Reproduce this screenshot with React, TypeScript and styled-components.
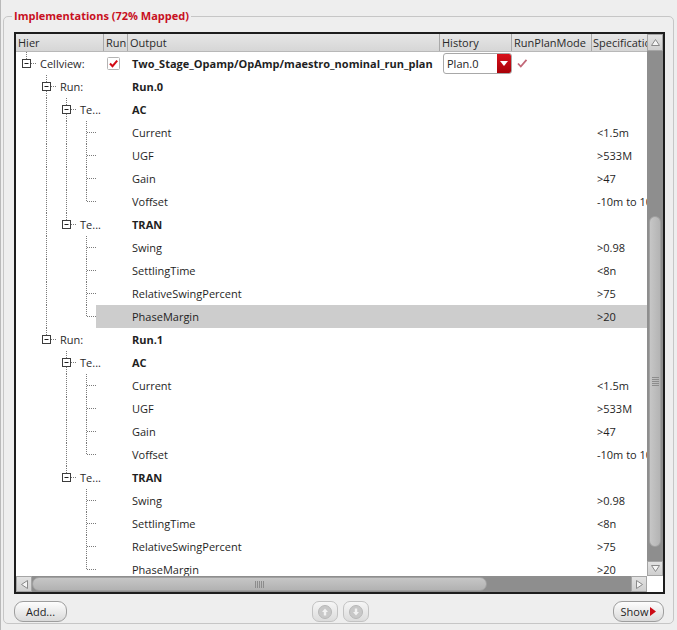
import React from 'react';
import styled, { createGlobalStyle } from 'styled-components';

const GlobalStyle = createGlobalStyle`
  body {
    margin: 0;
    background: #eeeeee;
    font-family: "Open Sans", "DejaVu Sans", sans-serif;
    font-size: 11px;
    color: #222;
  }
`;

type Branch = 'empty' | 'pass' | 'tee' | 'last' | 'teeExp' | 'lastExp';

type RowData = {
  branches: Branch[];
  hier?: string;
  output: string;
  bold?: boolean;
  spec?: string;
  selected?: boolean;
  top?: boolean;
};

const leaves = (pre: Branch[], items: [string, string][], selectLast = false): RowData[] =>
  items.map(([output, spec], i) => ({
    branches: [...pre, i === items.length - 1 ? 'last' : 'tee'],
    output,
    spec,
    selected: selectLast && i === items.length - 1,
  }));

const acItems: [string, string][] = [
  ['Current', '<1.5m'],
  ['UGF', '>533M'],
  ['Gain', '>47'],
  ['Voffset', '-10m to 10m'],
];
const tranItems: [string, string][] = [
  ['Swing', '>0.98'],
  ['SettlingTime', '<8n'],
  ['RelativeSwingPercent', '>75'],
  ['PhaseMargin', '>20'],
];

const rows: RowData[] = [
  { branches: ['lastExp'], hier: 'Cellview:', output: 'Two_Stage_Opamp/OpAmp/maestro_nominal_run_plan', bold: true, top: true },
  { branches: ['empty', 'teeExp'], hier: 'Run:', output: 'Run.0', bold: true },
  { branches: ['empty', 'pass', 'teeExp'], hier: 'Te...', output: 'AC', bold: true },
  ...leaves(['empty', 'pass', 'pass'], acItems),
  { branches: ['empty', 'pass', 'lastExp'], hier: 'Te...', output: 'TRAN', bold: true },
  ...leaves(['empty', 'pass', 'empty'], tranItems, true),
  { branches: ['empty', 'lastExp'], hier: 'Run:', output: 'Run.1', bold: true },
  { branches: ['empty', 'empty', 'teeExp'], hier: 'Te...', output: 'AC', bold: true },
  ...leaves(['empty', 'empty', 'pass'], acItems),
  { branches: ['empty', 'empty', 'lastExp'], hier: 'Te...', output: 'TRAN', bold: true },
  ...leaves(['empty', 'empty', 'empty'], tranItems),
];

const COLS = '88px 24px 312px 72px 80px 55px';

const Page = styled.div`
  width: 674px;
  height: 630px;
  border-left: 1px solid #b9b9b9;
  padding-left: 2px;
  overflow: hidden;
`;

const Group = styled.fieldset`
  margin: 9px 0 0 0;
  width: 670px;
  box-sizing: border-box;
  border: 1px solid #c6c6c6;
  border-radius: 5px;
  padding: 9px 8px 1px 10px;
`;

const Legend = styled.legend`
  margin-left: -2px;
  padding: 0 2px;
  line-height: 14px;
  font-weight: bold;
  color: #c8101e;
`;

const TreeFrame = styled.div`
  border: 2px solid #1d1d1d;
  display: grid;
  grid-template-columns: 631px 16px;
  grid-template-rows: 542px 16px;
  background: #fff;
`;

const Main = styled.div`
  display: flex;
  flex-direction: column;
  overflow: hidden;
`;

const HeaderRow = styled.div`
  display: grid;
  grid-template-columns: ${COLS};
  height: 18px;
  background: linear-gradient(#e6e6e6, #d6d6d6);
  border-bottom: 1px solid #b8b8b8;
  box-sizing: border-box;
`;

const HeaderCell = styled.div<{ $last?: boolean }>`
  padding-left: ${(p) => (p.$last ? 1 : 2)}px;
  line-height: 17px;
  white-space: nowrap;
  overflow: hidden;
  color: #2a2a2a;
  border-right: ${(p) => (p.$last ? 'none' : '1px solid #a9a9a9')};
`;

const Body = styled.div`
  height: 524px;
  overflow: hidden;
`;

const Row = styled.div`
  display: grid;
  grid-template-columns: ${COLS};
  height: 23px;
`;

const HierCell = styled.div`
  display: flex;
  overflow: hidden;
`;

const HierLabel = styled.div<{ $selected?: boolean }>`
  flex: 1;
  padding-left: 4px;
  line-height: 23px;
  white-space: nowrap;
  color: #2a2a2a;
  background: ${(p) => (p.$selected ? '#cdcdcd' : 'transparent')};
`;

const Cell = styled.div<{ $selected?: boolean; $pad?: number; $bold?: boolean }>`
  display: flex;
  align-items: center;
  padding-left: ${(p) => p.$pad ?? 4}px;
  white-space: nowrap;
  overflow: hidden;
  font-weight: ${(p) => (p.$bold ? 'bold' : 'normal')};
  color: #1f1f1f;
  background: ${(p) => (p.$selected ? '#cdcdcd' : 'transparent')};
`;

const Combo = styled.div`
  display: flex;
  width: 69px;
  height: 21px;
  box-sizing: border-box;
  border: 1px solid #a8a8a8;
  border-radius: 3px;
  background: #fff;
  overflow: hidden;
`;

const ComboText = styled.div`
  flex: 1;
  padding-left: 3px;
  line-height: 19px;
  color: #222;
`;

const ComboButton = styled.div`
  width: 14px;
  display: flex;
  align-items: center;
  justify-content: center;
  background: linear-gradient(#d8121c, #a80008);
`;

const VScroll = styled.div`
  display: flex;
  flex-direction: column;
  background: #8e8e8e;
`;

const ArrowBox = styled.div<{ $h: number }>`
  height: ${(p) => p.$h}px;
  display: flex;
  align-items: center;
  justify-content: center;
  background: linear-gradient(#e2e2e2, #cfcfcf);
  border: 1px solid #a5a5a5;
  box-sizing: border-box;
`;

const VTrack = styled.div`
  flex: 1;
  display: flex;
  flex-direction: column;
  align-items: center;
`;

const VThumb = styled.div<{ $top: number; $size: number }>`
  margin-top: ${(p) => p.$top}px;
  width: 12px;
  height: ${(p) => p.$size}px;
  border-radius: 6px;
  background: linear-gradient(90deg, #c6c6c6, #b4b4b4);
  border: 1px solid #a0a0a0;
  box-sizing: border-box;
  display: flex;
  align-items: center;
  justify-content: center;
`;

const HScroll = styled.div`
  display: flex;
  background: #8e8e8e;
`;

const HArrow = styled.div`
  width: 16px;
  display: flex;
  align-items: center;
  justify-content: center;
  background: linear-gradient(#e2e2e2, #cfcfcf);
  border: 1px solid #a5a5a5;
  box-sizing: border-box;
`;

const HTrack = styled.div`
  flex: 1;
  display: flex;
  align-items: center;
`;

const HThumb = styled.div<{ $size: number }>`
  width: ${(p) => p.$size}px;
  height: 14px;
  border-radius: 7px;
  background: linear-gradient(#c6c6c6, #b2b2b2);
  border: 1px solid #a0a0a0;
  box-sizing: border-box;
  display: flex;
  align-items: center;
  justify-content: center;
`;

const Corner = styled.div`
  background: #fff;
`;

const ButtonBar = styled.div`
  display: flex;
  align-items: center;
  justify-content: space-between;
  margin-top: 7px;
  height: 21px;
  padding-right: 1px;
`;

const PushButton = styled.button<{ $w: number }>`
  width: ${(p) => p.$w}px;
  height: 21px;
  padding: 0;
  border: 1px solid #9e9e9e;
  border-radius: 9px;
  background: linear-gradient(#fdfdfd, #dadada);
  font-family: inherit;
  font-size: 11px;
  color: #1f1f1f;
  display: flex;
  align-items: center;
  justify-content: center;
  gap: 2px;
`;

const IconGroup = styled.div`
  display: flex;
  gap: 5px;
`;

const IconButton = styled.div`
  width: 26px;
  height: 21px;
  box-sizing: border-box;
  border: 1px solid #c2c2c2;
  border-radius: 7px;
  background: linear-gradient(#f6f6f6, #dcdcdc);
  display: flex;
  align-items: center;
  justify-content: center;
`;

const dot = { stroke: '#7a7a7a', strokeWidth: 1, strokeDasharray: '1 1' };

const BranchCell = ({ kind }: { kind: Branch }) => {
  const exp = kind === 'teeExp' || kind === 'lastExp';
  const full = kind === 'pass' || kind === 'tee' || kind === 'teeExp';
  const half = kind === 'last' || kind === 'lastExp';
  const horiz = kind !== 'empty' && kind !== 'pass';
  return (
    <svg width="20" height="23" style={{ flex: 'none' }}>
      {full && <line x1="10.5" y1="0" x2="10.5" y2="23" {...dot} />}
      {half && <line x1="10.5" y1="0" x2="10.5" y2="11" {...dot} />}
      {horiz && <line x1="11" y1="11.5" x2="20" y2="11.5" {...dot} />}
      {exp && (
        <g>
          <rect x="6.5" y="7.5" width="8" height="8" fill="#fff" stroke="#3c3c3c" />
          <line x1="8.5" y1="11.5" x2="12.5" y2="11.5" stroke="#222" />
        </g>
      )}
    </svg>
  );
};

const CheckBox = () => (
  <svg width="13" height="13">
    <rect x="0.5" y="0.5" width="12" height="12" rx="1" fill="#fff" stroke="#b4b4b4" />
    <path d="M3 6.5 L5.5 9.2 L10.2 3.6" fill="none" stroke="#d20a14" strokeWidth="2" />
  </svg>
);

const SoftCheck = () => (
  <svg width="13" height="13">
    <path d="M2 6.5 L4.8 9.5 L10.5 2.8" fill="none" stroke="#c26878" strokeWidth="1.8" />
  </svg>
);

const Tri = ({ dir }: { dir: 'up' | 'down' | 'left' | 'right' }) => {
  const pts = {
    up: '1.5,7.5 5.5,1.5 9.5,7.5',
    down: '1.5,1.5 5.5,7.5 9.5,1.5',
    left: '7.5,1.5 1.5,5.5 7.5,9.5',
    right: '1.5,1.5 7.5,5.5 1.5,9.5',
  }[dir];
  const vert = dir === 'up' || dir === 'down';
  return (
    <svg width={vert ? 11 : 9} height={vert ? 9 : 11}>
      <polygon points={pts} fill="#f4f4f4" stroke="#8a8a8a" />
    </svg>
  );
};

const Grip = ({ vertical }: { vertical?: boolean }) => (
  <svg width={vertical ? 7 : 9} height={vertical ? 9 : 7}>
    {[0, 2, 4, 6, 8].map((o) =>
      vertical ? (
        <line key={o} x1="0" y1={o + 0.5} x2="7" y2={o + 0.5} stroke="#8c8c8c" />
      ) : (
        <line key={o} x1={o + 0.5} y1="0" x2={o + 0.5} y2="7" stroke="#8c8c8c" />
      )
    )}
  </svg>
);

const RoundIcon = ({ up }: { up?: boolean }) => (
  <svg width="14" height="14">
    <circle cx="7" cy="7" r="6.5" fill="#c8c8c8" stroke="#b8b8b8" />
    <path d={up ? 'M7 3.5 L10 7 L8.2 7 L8.2 10.5 L5.8 10.5 L5.8 7 L4 7 Z' : 'M7 10.5 L10 7 L8.2 7 L8.2 3.5 L5.8 3.5 L5.8 7 L4 7 Z'} fill="#f2f2f2" />
  </svg>
);

export default function App() {
  return (
    <Page>
      <GlobalStyle />
      <Group>
        <Legend>Implementations (72% Mapped)</Legend>
        <TreeFrame>
          <Main>
            <HeaderRow>
              <HeaderCell>Hier</HeaderCell>
              <HeaderCell>Run</HeaderCell>
              <HeaderCell>Output</HeaderCell>
              <HeaderCell>History</HeaderCell>
              <HeaderCell>RunPlanMode</HeaderCell>
              <HeaderCell $last>Specification</HeaderCell>
            </HeaderRow>
            <Body>
              {rows.map((r, i) => (
                <Row key={i}>
                  <HierCell>
                    {r.branches.map((b, j) => (
                      <BranchCell key={j} kind={b} />
                    ))}
                    <HierLabel $selected={r.selected}>{r.hier}</HierLabel>
                  </HierCell>
                  <Cell $selected={r.selected} $pad={3}>
                    {r.top && <CheckBox />}
                  </Cell>
                  <Cell $selected={r.selected} $bold={r.bold}>
                    {r.output}
                  </Cell>
                  <Cell $selected={r.selected} $pad={3}>
                    {r.top && (
                      <Combo>
                        <ComboText>Plan.0</ComboText>
                        <ComboButton>
                          <svg width="8" height="5">
                            <polygon points="0,0 8,0 4,5" fill="#fff" />
                          </svg>
                        </ComboButton>
                      </Combo>
                    )}
                  </Cell>
                  <Cell $selected={r.selected} $pad={4}>
                    {r.top && <SoftCheck />}
                  </Cell>
                  <Cell $selected={r.selected} $pad={5}>
                    {r.spec}
                  </Cell>
                </Row>
              ))}
            </Body>
          </Main>
          <VScroll>
            <ArrowBox $h={17}>
              <Tri dir="up" />
            </ArrowBox>
            <VTrack>
              <VThumb $top={165} $size={331}>
                <Grip vertical />
              </VThumb>
            </VTrack>
            <ArrowBox $h={15}>
              <Tri dir="down" />
            </ArrowBox>
          </VScroll>
          <HScroll>
            <HArrow>
              <Tri dir="left" />
            </HArrow>
            <HTrack>
              <HThumb $size={455}>
                <Grip />
              </HThumb>
            </HTrack>
            <HArrow>
              <Tri dir="right" />
            </HArrow>
          </HScroll>
          <Corner />
        </TreeFrame>
        <ButtonBar>
          <PushButton $w={53}>Add...</PushButton>
          <IconGroup>
            <IconButton>
              <RoundIcon up />
            </IconButton>
            <IconButton>
              <RoundIcon />
            </IconButton>
          </IconGroup>
          <PushButton $w={51}>
            Show
            <svg width="6" height="9">
              <polygon points="0,0 6,4.5 0,9" fill="#cc0a14" />
            </svg>
          </PushButton>
        </ButtonBar>
      </Group>
    </Page>
  );
}
